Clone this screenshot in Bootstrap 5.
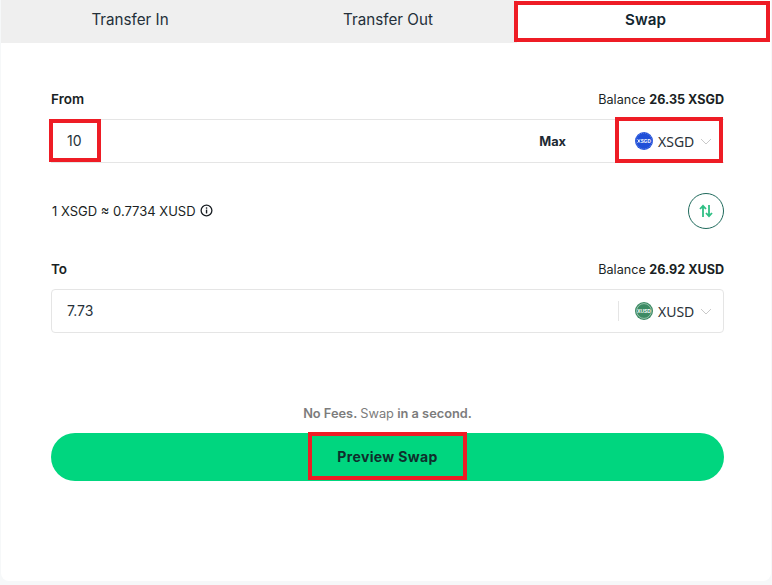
<!DOCTYPE html>
<html lang="en"><head><meta charset="utf-8"><title>Swap</title>
<link rel="stylesheet" href="https://cdn.jsdelivr.net/npm/bootstrap@5.3.0/dist/css/bootstrap.min.css">
<style>
html,body{height:100%;overflow:hidden}
body{background:#f6f8f9;font-family:Inter,"Liberation Sans",sans-serif;color:#1a1f24;font-size:13px}
.stage{position:relative;height:100%}
.panel{background:#fff;height:581px;margin:0 1px;border-radius:0 0 8px 8px;display:flex;flex-direction:column}
.tabbar{display:flex;height:43px;background:#efefef;flex:none}
.tabitem{flex:none;width:258px;display:flex;align-items:center;justify-content:center;font-size:15.2px;color:#24303a;padding-bottom:2px}
.tabitem.on{flex:1 1 auto;width:auto;background:#fff;font-weight:600;color:#12262f;padding-left:3px}
.body-wrap{padding:47px 47px 0 50px}
.lab-row{display:flex;justify-content:space-between;align-items:center;height:18px;margin-bottom:11px;padding-top:2px}
.lab{font-weight:600;font-size:13.5px;padding-bottom:2px}
.bal{font-size:12.6px}
.bal b{font-weight:700}
.fieldbox{height:44px;border:1px solid #e5e5e5;display:flex;align-items:center}
.fieldbox.top{border-left:0;border-right:0}
.fieldbox.round{border-radius:4px}
.val{padding-left:16px;font-size:14px;flex:1 1 auto;color:#27323a;padding-bottom:2px}
.round .val{padding-left:15px}
.maxlab{font-weight:700;font-size:12.8px;margin-right:53px;color:#1d2a33;padding-top:1px}
.picker{display:flex;align-items:center;width:105px;padding-left:16px;font:14px "Noto Sans",sans-serif;color:#2a3138;height:100%}
.sep{border-left:1px solid #e5e5e5;height:20px;width:105px}
.coin{width:18px;height:18px;flex:none;margin-right:5px}
.chev{width:12px;height:7px;margin-left:6px;flex:none}
.rate-row{display:flex;justify-content:space-between;align-items:center;height:36px;margin:30px 0 31px}
.rate-txt{padding:2px 0 0 1px}
.info{width:13px;height:13px;margin:0 0 5px 4px}
.swapbtn{width:36px;height:36px;border:1px solid #1f6a5c;border-radius:50%;display:flex;align-items:center;justify-content:center;background:#fff;padding:0}
.note{text-align:center;color:#7c7c7c;font-size:12.8px;font-weight:600;margin-top:72px;height:18px;line-height:18px}
.note span{font-weight:400}
.cta{display:flex;width:100%;height:48px;margin-top:10px;border:0;border-radius:24px;background:#00d67f;align-items:center;justify-content:center;font-weight:700;font-size:14px;color:#0f2e2c;letter-spacing:.35px;padding-bottom:2px}
.redbox{position:absolute;border:4px solid #ee1c25;pointer-events:none}
.r-swap{left:514px;top:1px;width:256px;height:41px}
.r-ten{left:49px;top:119px;width:52px;height:43px}
.r-coin{left:615px;top:117px;width:108px;height:46px}
.r-cta{left:308px;top:432px;width:159px;height:48px}
.cointxt{font-family:"Liberation Sans",sans-serif;font-weight:700}
</style></head><body>
<div class="stage">
<div class="panel">
 <div class="tabbar"><div class="tabitem">Transfer In</div><div class="tabitem">Transfer Out</div><div class="tabitem on">Swap</div></div>
 <div class="body-wrap">
  <div class="lab-row"><span class="lab">From</span><span class="bal">Balance <b>26.35 XSGD</b></span></div>
  <div class="fieldbox top"><span class="val">10</span><span class="maxlab">Max</span>
   <span class="picker">
    <svg class="coin" viewBox="0 0 18 18"><circle cx="9" cy="9" r="9" fill="#1f4fd8"/><circle cx="9" cy="9" r="7.9" fill="none" stroke="#9db3f2" stroke-width=".5" stroke-dasharray="1 1"/><path d="M2.6 7.2l2.6 3.6M5.2 7.2l-2.6 3.6" stroke="#fff" stroke-width=".9"/><text class="cointxt" x="5.8" y="10.9" font-size="4.6" fill="#fff">SGD</text></svg>XSGD
    <svg class="chev" viewBox="0 0 12 7"><path d="M1 1l5 5 5-5" fill="none" stroke="#c9c9c9" stroke-width="1"/></svg>
   </span></div>
  <div class="rate-row"><span class="rate-txt">1 XSGD ≈ 0.7734 XUSD<svg class="info" viewBox="0 0 14 14"><circle cx="7" cy="7" r="5.8" fill="none" stroke="#1a1f24" stroke-width="1.4"/><rect x="6.3" y="6" width="1.5" height="4.2" fill="#1a1f24"/><rect x="6.3" y="3.6" width="1.5" height="1.5" fill="#1a1f24"/></svg></span>
   <button class="swapbtn" type="button" aria-label="Swap direction"><svg width="14" height="14" viewBox="0 0 14 14"><path d="M4 13V2M1 5l3-3.2L7 5M10 1v11M7 9l3 3.2L13 9" fill="none" stroke="#2fbf84" stroke-width="1.8"/></svg></button></div>
  <div class="lab-row"><span class="lab">To</span><span class="bal">Balance <b>26.92 XUSD</b></span></div>
  <div class="fieldbox round"><span class="val">7.73</span>
   <span class="picker sep">
    <svg class="coin" viewBox="0 0 18 18"><circle cx="9" cy="9" r="9" fill="#3c8a63"/><circle cx="9" cy="9" r="7.4" fill="none" stroke="#cfe6da" stroke-width=".6"/><text class="cointxt" x="9" y="10.8" font-size="4.8" fill="#fff" text-anchor="middle">XUSD</text></svg>XUSD
    <svg class="chev" viewBox="0 0 12 7"><path d="M1 1l5 5 5-5" fill="none" stroke="#c9c9c9" stroke-width="1"/></svg>
   </span></div>
  <div class="note">No Fees. <span>Swap</span> in a second.</div>
  <button class="cta" type="button">Preview Swap</button>
 </div>
</div>
<div class="redbox r-swap"></div><div class="redbox r-ten"></div><div class="redbox r-coin"></div><div class="redbox r-cta"></div>
</div>
<script src="https://cdn.jsdelivr.net/npm/bootstrap@5.3.0/dist/js/bootstrap.bundle.min.js"></script>
</body></html>
